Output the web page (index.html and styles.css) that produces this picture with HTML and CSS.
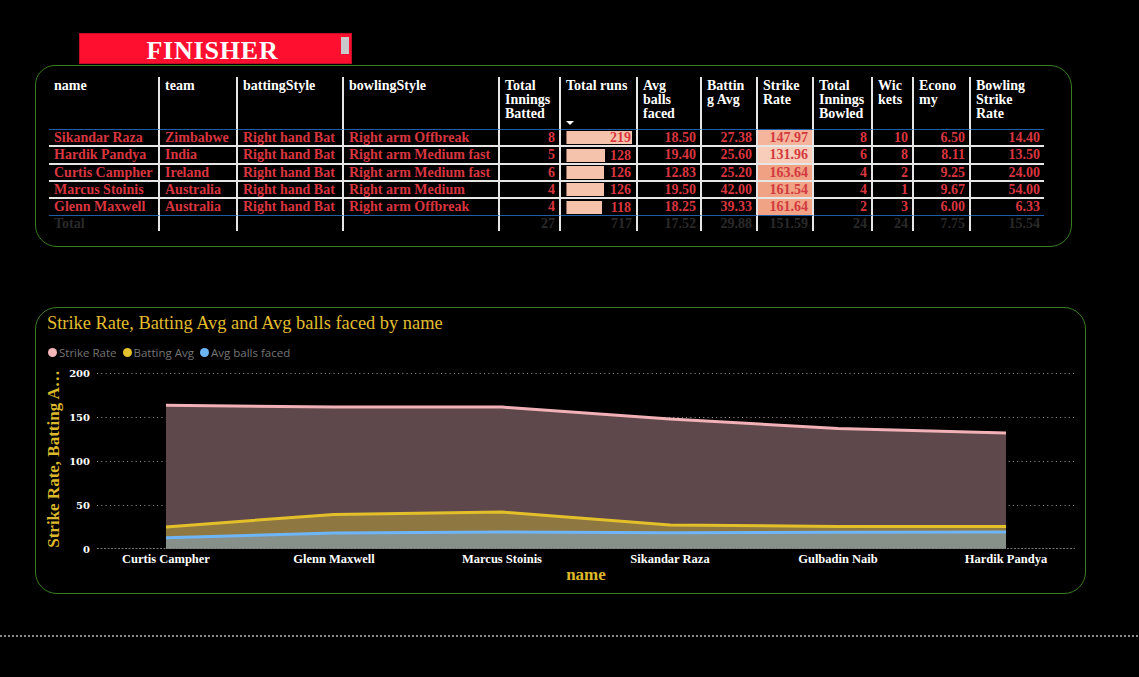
FILE: index.html
```html
<!DOCTYPE html>
<html lang="en">
<head>
<meta charset="utf-8">
<title>FINISHER</title>
<link rel="stylesheet" href="styles.css">
</head>
<body>
<div class="page">
  <div class="banner">
    <span class="banner-title">FINISHER</span>
    <span class="banner-handle"></span>
  </div>

  <section class="card table-card">
    <table class="stats">
      <colgroup>
        <col style="width:111px"><col style="width:78px"><col style="width:106px"><col style="width:156px">
        <col style="width:61px"><col style="width:77px"><col style="width:64px"><col style="width:56px">
        <col style="width:56px"><col style="width:59px"><col style="width:41px"><col style="width:57px"><col style="width:73px">
      </colgroup>
      <thead>
        <tr>
          <th>name</th>
          <th>team</th>
          <th>battingStyle</th>
          <th>bowlingStyle</th>
          <th>Total<br>Innings<br>Batted</th>
          <th>Total runs<span class="sort-caret"></span></th>
          <th>Avg<br>balls<br>faced</th>
          <th>Battin<br>g Avg</th>
          <th>Strike<br>Rate</th>
          <th>Total<br>Innings<br>Bowled</th>
          <th>Wic<br>kets</th>
          <th>Econo<br>my</th>
          <th>Bowling<br>Strike<br>Rate</th>
        </tr>
      </thead>
      <tbody>
        <tr>
          <td>Sikandar Raza</td><td>Zimbabwe</td><td>Right hand Bat</td><td>Right arm Offbreak</td>
          <td class="num">8</td>
          <td class="runs"><div class="bar-wrap"><div class="bar" style="width:100%"></div><span class="bar-num">219</span></div></td>
          <td class="num">18.50</td><td class="num">27.38</td>
          <td class="num sr" style="background:#f4b59c">147.97</td>
          <td class="num">8</td><td class="num">10</td><td class="num">6.50</td><td class="num">14.40</td>
        </tr>
        <tr class="row-tall">
          <td>Hardik Pandya</td><td>India</td><td>Right hand Bat</td><td>Right arm Medium fast</td>
          <td class="num">5</td>
          <td class="runs"><div class="bar-wrap"><div class="bar" style="width:58.4%"></div><span class="bar-num">128</span></div></td>
          <td class="num">19.40</td><td class="num">25.60</td>
          <td class="num sr" style="background:#f8cdb9">131.96</td>
          <td class="num">6</td><td class="num">8</td><td class="num">8.11</td><td class="num">13.50</td>
        </tr>
        <tr>
          <td>Curtis Campher</td><td>Ireland</td><td>Right hand Bat</td><td>Right arm Medium fast</td>
          <td class="num">6</td>
          <td class="runs"><div class="bar-wrap"><div class="bar" style="width:57.5%"></div><span class="bar-num">126</span></div></td>
          <td class="num">12.83</td><td class="num">25.20</td>
          <td class="num sr" style="background:#f0a183">163.64</td>
          <td class="num">4</td><td class="num">2</td><td class="num">9.25</td><td class="num">24.00</td>
        </tr>
        <tr>
          <td>Marcus Stoinis</td><td>Australia</td><td>Right hand Bat</td><td>Right arm Medium</td>
          <td class="num">4</td>
          <td class="runs"><div class="bar-wrap"><div class="bar" style="width:57.5%"></div><span class="bar-num">126</span></div></td>
          <td class="num">19.50</td><td class="num">42.00</td>
          <td class="num sr" style="background:#f0a385">161.54</td>
          <td class="num">4</td><td class="num">1</td><td class="num">9.67</td><td class="num">54.00</td>
        </tr>
        <tr>
          <td>Glenn Maxwell</td><td>Australia</td><td>Right hand Bat</td><td>Right arm Offbreak</td>
          <td class="num">4</td>
          <td class="runs"><div class="bar-wrap"><div class="bar" style="width:53.9%"></div><span class="bar-num">118</span></div></td>
          <td class="num">18.25</td><td class="num">39.33</td>
          <td class="num sr" style="background:#f0a385">161.64</td>
          <td class="num">2</td><td class="num">3</td><td class="num">6.00</td><td class="num">6.33</td>
        </tr>
      </tbody>
      <tfoot>
        <tr>
          <td>Total</td><td></td><td></td><td></td>
          <td class="num">27</td><td class="num">717</td><td class="num">17.52</td><td class="num">29.88</td>
          <td class="num">151.59</td><td class="num">24</td><td class="num">24</td><td class="num">7.75</td><td class="num">15.54</td>
        </tr>
      </tfoot>
    </table>
  </section>

  <section class="card chart-card">
    <h2 class="chart-title">Strike Rate, Batting Avg and Avg balls faced by name</h2>
    <div class="legend">
      <span class="legend-item"><span class="dot dot-sr"></span>Strike Rate</span>
      <span class="legend-item"><span class="dot dot-ba"></span>Batting Avg</span>
      <span class="legend-item"><span class="dot dot-abf"></span>Avg balls faced</span>
    </div>
    <svg class="plot" width="1048" height="230" viewBox="36 362 1048 230" xmlns="http://www.w3.org/2000/svg">
      <g class="gridlines">
        <line x1="97" y1="373.5" x2="1075" y2="373.5"/>
        <line x1="97" y1="417.5" x2="1075" y2="417.5"/>
        <line x1="97" y1="461.5" x2="1075" y2="461.5"/>
        <line x1="97" y1="505.5" x2="1075" y2="505.5"/>
      </g>
      <g class="ticks">
        <text x="90" y="377">200</text>
        <text x="90" y="421">150</text>
        <text x="90" y="465">100</text>
        <text x="90" y="509">50</text>
        <text x="90" y="553">0</text>
      </g>
      <polygon class="area-sr" points="166,549 166,405.2 334,407 502,407.1 670,419 838,428.5 1006,433.1 1006,549"/>
      <polygon class="area-ba" points="166,549 166,526.9 334,514.4 502,512.1 670,525 838,526.5 1006,526.5 1006,549"/>
      <polygon class="area-abf" points="166,549 166,537.7 334,533 502,531.9 670,532.7 838,532.2 1006,532 1006,549"/>
      <line class="zero-line" x1="97" y1="548.5" x2="1075" y2="548.5"/>
      <polyline class="line-sr" points="166,405.2 334,407 502,407.1 670,419 838,428.5 1006,433.1"/>
      <polyline class="line-ba" points="166,526.9 334,514.4 502,512.1 670,525 838,526.5 1006,526.5"/>
      <polyline class="line-abf" points="166,537.7 334,533 502,531.9 670,532.7 838,532.2 1006,532"/>
      <g class="xlabels">
        <text x="166" y="563">Curtis Campher</text>
        <text x="334" y="563">Glenn Maxwell</text>
        <text x="502" y="563">Marcus Stoinis</text>
        <text x="670" y="563">Sikandar Raza</text>
        <text x="838" y="563">Gulbadin Naib</text>
        <text x="1006" y="563">Hardik Pandya</text>
      </g>
      <text class="axis-title" x="586" y="580">name</text>
      <text class="axis-title" transform="translate(59 459) rotate(-90)" x="0" y="0">Strike Rate, Batting A…</text>
    </svg>
  </section>

  <div class="dotted-rule"></div>
</div>
</body>
</html>
```

FILE: styles.css
```css
* { box-sizing: border-box; }

body {
  margin: 0;
  background: #000;
  font-family: "Liberation Serif", "DejaVu Serif", serif;
}

.page {
  width: 1139px;
  height: 677px;
  padding-top: 33px;
  overflow: hidden;
}

/* Banner */
.banner {
  position: relative;
  display: flex;
  justify-content: center;
  align-items: flex-start;
  margin-left: 79px;
  width: 273px;
  height: 31px;
  padding: 4px 6px 0 0;
  background: #ff0f2f;
  border: 1px solid #c40d26;
}
.banner-title {
  color: #fff;
  font-weight: 700;
  font-size: 26px;
  line-height: 26px;
  letter-spacing: 0.8px;
}
.banner-handle {
  position: absolute;
  left: 261px;
  top: 3px;
  width: 8px;
  height: 17px;
  background: #c9c9cc;
}

/* Cards */
.card {
  border: 1px solid #3b7d22;
  background: #000;
}
.table-card {
  margin: 1px 0 0 35px;
  width: 1037px;
  height: 182px;
  border-radius: 20px 22px 22px 22px;
  padding: 11px 0 0 13px;
}
.chart-card {
  margin: 60px 0 0 35px;
  width: 1051px;
  height: 287px;
  border-radius: 22px;
}

/* Table */
.stats {
  border-collapse: separate;
  border-spacing: 0;
  table-layout: fixed;
  width: 995px;
  font-size: 14px;
  font-weight: 700;
}
.stats th {
  color: #fff;
  text-align: left;
  vertical-align: top;
  padding: 2px 5px 0;
  height: 53px;
  line-height: 14px;
  font-weight: 700;
  border-right: 2px solid #e6e6e6;
  border-bottom: 1px solid #1e5ea6;
}
.stats td {
  color: #d9353f;
  height: 17px;
  line-height: 15px;
  padding: 0 5px;
  white-space: nowrap;
  overflow: hidden;
  border-right: 2px solid #e6e6e6;
  border-bottom: 2px solid #e6e6e6;
}
.stats tr.row-tall td { height: 18px; line-height: 16px; }
.stats th:last-child,
.stats td:last-child { border-right: none; }
.stats tbody tr:last-child td {
  height: 17px;
  line-height: 16px;
  border-bottom: 1px solid #1e5ea6;
}
.stats tfoot td {
  color: #2a2a2a;
  height: 15px;
  border-bottom: none;
}
.stats td.num { text-align: right; padding-right: 4px; }
.stats td.sr { color: #d23a40; }
.stats td.runs { padding: 0 4px 0 5px; }

.sort-caret {
  display: block;
  width: 0;
  margin-top: 28px;
  border-left: 4px solid transparent;
  border-right: 4px solid transparent;
  border-top: 4px solid #fff;
}

.bar-wrap {
  display: grid;
  align-items: center;
  height: 15px;
}
.bar,
.bar-num { grid-area: 1 / 1; }
.bar {
  height: 13px;
  background: #f5c3ab;
  border-left: 1px solid #8e6a5c;
}
.bar-num {
  text-align: right;
  padding-right: 1px;
}

/* Chart */
.chart-title {
  margin: 0;
  padding: 4px 0 0 11px;
  font-weight: 400;
  font-size: 18.4px;
  line-height: 22px;
  color: #e3bd2e;
}
.legend {
  display: flex;
  align-items: center;
  height: 16px;
  margin: 10px 0 0 12px;
  font-family: "Open Sans", "DejaVu Sans", sans-serif;
  font-size: 11.5px;
  color: #757575;
}
.legend-item {
  display: flex;
  align-items: center;
  gap: 2px;
  margin-right: 6px;
}
.dot {
  width: 9px;
  height: 9px;
  border-radius: 50%;
}
.dot-sr { background: #f4b6b9; }
.dot-ba { background: #e5c12d; }
.dot-abf { background: #6cb4f5; }

.plot {
  display: block;
  margin-top: 2px;
}
.gridlines line {
  stroke: #9a9a9a;
  stroke-width: 1;
  stroke-dasharray: 1 3.3;
}
.zero-line {
  stroke: #777;
  stroke-width: 1;
  stroke-dasharray: 2 1.5;
}
.ticks text {
  fill: #fff;
  font-family: "DejaVu Serif", serif;
  font-weight: 700;
  font-size: 10px;
  text-anchor: end;
}
.area-sr { fill: #5f484b; }
.area-ba { fill: #8f7742; }
.area-abf { fill: #87918a; }
.line-sr, .line-ba, .line-abf {
  fill: none;
  stroke-width: 3;
  stroke-linejoin: round;
}
.line-sr { stroke: #f2b1b6; }
.line-ba { stroke: #e3c02a; }
.line-abf { stroke: #6db5f6; }
.xlabels text {
  fill: #fff;
  font-family: "Liberation Serif", serif;
  font-weight: 700;
  font-size: 12.5px;
  text-anchor: middle;
}
.axis-title {
  fill: #dcb82b;
  font-family: "Liberation Serif", serif;
  font-weight: 700;
  font-size: 17px;
  text-anchor: middle;
}

.dotted-rule {
  margin-top: 41px;
  height: 2px;
  background: repeating-linear-gradient(90deg, #8a8a8a 0 2px, transparent 2px 4px);
}
```
